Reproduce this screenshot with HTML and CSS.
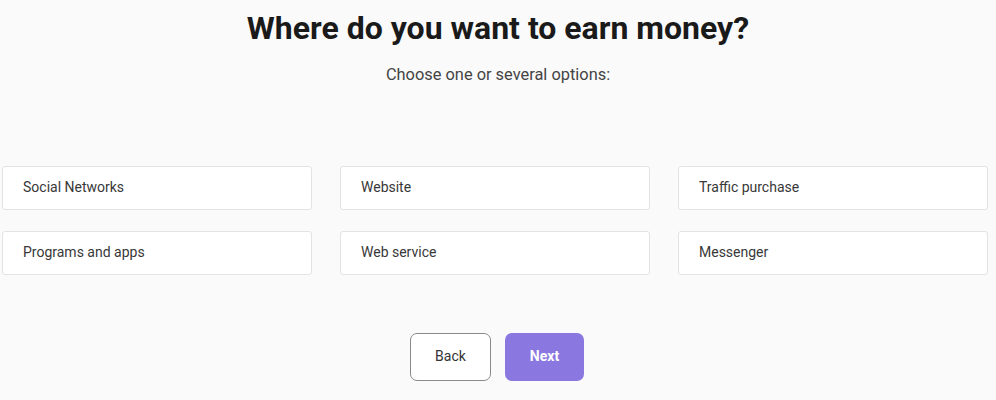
FILE: index.html
```html
<!DOCTYPE html>
<html>
<head>
<meta charset="utf-8">
<link rel="stylesheet" href="styles.css">
</head>
<body>
<main class="page">
  <h1 class="title">Where do you want to earn money?</h1>
  <p class="subtitle">Choose one or several options:</p>
  <div class="options">
    <div class="option">Social Networks</div>
    <div class="option">Website</div>
    <div class="option">Traffic purchase</div>
    <div class="option">Programs and apps</div>
    <div class="option">Web service</div>
    <div class="option">Messenger</div>
  </div>
  <div class="actions">
    <button class="btn btn-back">Back</button>
    <button class="btn btn-next">Next</button>
  </div>
</main>
</body>
</html>
```

FILE: styles.css
```css
html, body {
  margin: 0;
  padding: 0;
  background: #fafafa;
  font-family: Roboto, "Liberation Sans", sans-serif;
}
.page {
  display: flex;
  flex-direction: column;
  align-items: center;
  padding-top: 8px;
}
.title {
  margin: 0;
  font-size: 32px;
  font-weight: 700;
  line-height: 40px;
  color: #1a1a1a;
}
.subtitle {
  margin: 17px 0 0;
  font-size: 16.4px;
  line-height: 20px;
  color: #444;
}
.options {
  align-self: flex-start;
  margin: 81px 0 0 2px;
  width: 986px;
  display: grid;
  grid-template-columns: repeat(3, 1fr);
  column-gap: 28px;
  row-gap: 21px;
}
.option {
  box-sizing: border-box;
  height: 44px;
  background: #fff;
  border: 1px solid #e3e3e3;
  border-radius: 3px;
  padding: 0 20px 3px;
  display: flex;
  align-items: center;
  font-size: 14px;
  color: #383838;
}
.actions {
  display: flex;
  gap: 14px;
  margin-top: 58px;
  margin-right: 2px;
}
.btn {
  box-sizing: border-box;
  height: 48px;
  border-radius: 7px;
  font-family: Roboto, "Liberation Sans", sans-serif;
  font-size: 14px;
  cursor: pointer;
  padding: 0 0 2px;
}
.btn-back {
  width: 81px;
  background: #fff;
  border: 1px solid #8a8a8a;
  color: #333;
}
.btn-next {
  width: 79px;
  background: #8a78e0;
  border: none;
  color: #fff;
  font-weight: 700;
}
```
